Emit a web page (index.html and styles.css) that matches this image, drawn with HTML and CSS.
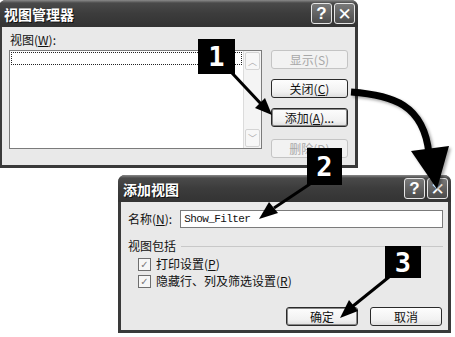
FILE: index.html
```html
<!DOCTYPE html>
<html lang="zh-CN">

<head>
  <meta charset="UTF-8">
  <title>视图管理器</title>
  <link rel="stylesheet" href="styles.css">
</head>

<body>
  <div class="stage">

    <!-- 视图管理器 -->
    <div class="window win-manager">
      <div class="titlebar">
        <span class="title">视图管理器</span>
        <span class="cap-btn">?</span>
        <span class="cap-btn close">✕</span>
      </div>
      <div class="body manager-body">
        <div class="list-col">
          <div class="label">视图(<u>W</u>):</div>
          <div class="listbox">
            <div class="list-rows">
              <div class="focus-row"></div>
            </div>
            <div class="scrollbar">
              <span class="sb-btn">︿</span>
              <span class="sb-btn">﹀</span>
            </div>
          </div>
        </div>
        <div class="btn-col">
          <span class="btn disabled">显示(S)</span>
          <span class="btn">关闭(<u>C</u>)</span>
          <span class="btn default">添加(<u>A</u>)...</span>
          <span class="btn disabled last">删除(D)</span>
        </div>
      </div>
    </div>

    <!-- 添加视图 -->
    <div class="window win-add">
      <div class="titlebar">
        <span class="title">添加视图</span>
        <span class="cap-btn">?</span>
        <span class="cap-btn close">✕</span>
      </div>
      <div class="body add-body">
        <div class="name-row">
          <span class="label">名称(<u>N</u>):</span>
          <span class="textbox">Show_Filter</span>
        </div>
        <div class="group-head">
          <span class="label">视图包括</span>
          <span class="rule"></span>
        </div>
        <div class="check-row">
          <span class="checkbox">✓</span>
          <span class="label">打印设置(<u>P</u>)</span>
        </div>
        <div class="check-row">
          <span class="checkbox">✓</span>
          <span class="label">隐藏行、列及筛选设置(<u>R</u>)</span>
        </div>
        <div class="ok-row">
          <span class="btn wide default">确定</span>
          <span class="btn wide">取消</span>
        </div>
      </div>
    </div>

    <!-- 箭头 -->
    <svg class="arrows" width="455" height="337" viewBox="0 0 455 337">
      <defs>
        <filter id="soft" x="-10%" y="-10%" width="130%" height="130%">
          <feDropShadow dx="2" dy="2" stdDeviation="1.5" flood-color="#000" flood-opacity="0.35" />
        </filter>
      </defs>
      <g fill="#000" stroke="#000">
        <line x1="232" y1="73" x2="262" y2="105" stroke-width="3" />
        <polygon points="272,115 255,108 265,98" stroke="none" />
        <line x1="310" y1="184" x2="274" y2="208" stroke-width="3" />
        <polygon points="259,219 269,202 278,213" stroke="none" />
        <line x1="389" y1="277" x2="353" y2="306" stroke-width="3" />
        <polygon points="340,318 349,300 358,311" stroke="none" />
      </g>
      <g filter="url(#soft)">
        <path d="M351,92 C392,95 424,104 429,154" fill="none" stroke="#000" stroke-width="7" />
        <polygon points="411,151 449,146 437,189" fill="#000" />
      </g>
    </svg>

    <span class="badge b1">1</span>
    <span class="badge b2">2</span>
    <span class="badge b3">3</span>
  </div>
</body>

</html>
```

FILE: styles.css
```css
html, body {
  margin: 0;
  background: #fff;
}

.stage {
  position: relative;
  width: 455px;
  height: 337px;
  overflow: hidden;
  font-family: "Noto Sans CJK SC", "Liberation Sans", sans-serif;
  font-size: 12px;
  color: #111;
}

u {
  text-decoration: underline;
  text-underline-offset: 1px;
}

/* windows */
.window {
  position: absolute;
  display: flex;
  flex-direction: column;
  background: #3a3a3a;
  border-radius: 7px 7px 0 0;
  padding: 0 3px 3px 3px;
  box-sizing: border-box;
}

.win-manager {
  left: -1px;
  top: 0;
  width: 359px;
  height: 168px;
}

.win-add {
  left: 118px;
  top: 175px;
  width: 333px;
  height: 158px;
}

.titlebar {
  display: flex;
  align-items: center;
  gap: 2px;
  height: 27px;
  padding: 0 3px 0 5px;
  margin: 0 -3px;
  border-radius: 7px 7px 0 0;
  background: linear-gradient(#8a8a8a 0, #4a4a4a 3px, #3c3c3c 50%, #333 100%);
}

.title {
  flex: 1;
  color: #fff;
  font-size: 14px;
  font-weight: bold;
  text-shadow: 1px 1px 0 #111;
}

.cap-btn {
  display: flex;
  align-items: center;
  justify-content: center;
  width: 19px;
  height: 19px;
  border: 1px solid #e6e6e6;
  border-radius: 3px;
  background: linear-gradient(#7a7a7a, #4b4b4b);
  color: #fff;
  font-family: "Liberation Sans", sans-serif;
  font-size: 17px;
  font-weight: bold;
}

.cap-btn.close {
  font-family: "DejaVu Sans", sans-serif;
  font-size: 17px;
  font-weight: bold;
}

.body {
  flex: 1;
  background: #e9e9e9;
}

/* 视图管理器 */
.manager-body {
  display: flex;
  padding: 5px 0 0 7px;
}

.list-col {
  display: flex;
  flex-direction: column;
}

.label {
  line-height: 14px;
  white-space: nowrap;
}

.list-col .label {
  margin-top: 1px;
  margin-bottom: 3px;
  padding-left: 1px;
}

.listbox {
  display: flex;
  width: 253px;
  height: 99px;
  box-sizing: border-box;
  border: 1px solid #7b7b7b;
  background: #fff;
}

.list-rows {
  flex: 1;
  padding: 1px 1px 0 1px;
}

.focus-row {
  height: 11px;
  border: 1px dotted #222;
}

.scrollbar {
  display: flex;
  flex-direction: column;
  justify-content: space-between;
  width: 17px;
  background: #f4f4f4;
  border-left: 1px solid #dcdcdc;
}

.sb-btn {
  display: flex;
  align-items: center;
  justify-content: center;
  height: 16px;
  margin: 1px;
  border: 1px solid #d4d4d4;
  border-radius: 2px;
  background: #f7f7f7;
  color: #aaa;
  font-size: 9px;
}

.btn-col {
  display: flex;
  flex-direction: column;
  gap: 10px;
  margin-left: 9px;
  padding-top: 18px;
}

.btn {
  display: flex;
  align-items: center;
  justify-content: center;
  width: 77px;
  height: 19px;
  box-sizing: border-box;
  border: 1px solid #2a2a2a;
  border-radius: 3px;
  background: linear-gradient(#fdfdfd, #f1f1f1 70%, #dedede);
  white-space: nowrap;
}

.btn.default {
  box-shadow: inset 0 0 0 1px #888;
}

.btn.disabled {
  border-color: #c4c4c4;
  color: #a8a8a8;
  background: #f2f2f2;
}

.btn.last {
  margin-top: 2px;
}

/* 添加视图 */
.add-body {
  display: flex;
  flex-direction: column;
  padding: 8px 5px 0 7px;
}

.name-row {
  display: flex;
  align-items: center;
  gap: 8px;
}

.textbox {
  flex: 1;
  height: 18px;
  box-sizing: border-box;
  border: 1px solid #7b7b7b;
  background: #fff;
  padding-left: 3px;
  font-family: "Liberation Mono", monospace;
  font-size: 11px;
  letter-spacing: -0.6px;
  line-height: 16px;
}

.group-head {
  display: flex;
  align-items: center;
  gap: 5px;
  margin-top: 11px;
}

.rule {
  flex: 1;
  border-top: 1px solid #c8c8c8;
}

.check-row {
  display: flex;
  align-items: center;
  gap: 5px;
  margin-top: 3px;
  padding-left: 10px;
}

.group-head + .check-row {
  margin-top: 4px;
}

.checkbox {
  display: flex;
  align-items: center;
  justify-content: center;
  width: 11px;
  height: 11px;
  border: 1px solid #6e6e6e;
  background: #f6f6f6;
  color: #7a7a7a;
  font-family: "DejaVu Sans", sans-serif;
  font-size: 10px;
  font-weight: bold;
}

.ok-row {
  display: flex;
  gap: 12px;
  margin-top: 19px;
  padding-left: 158px;
}

.btn.wide {
  width: 72px;
}

/* overlays */
.arrows {
  position: absolute;
  left: 0;
  top: 0;
}

.badge {
  position: absolute;
  display: flex;
  align-items: center;
  justify-content: center;
  background: #000;
  color: #fff;
  font-family: "DejaVu Sans Mono", monospace;
  font-weight: bold;
  font-size: 27px;
}

.b1 {
  left: 198px;
  top: 39px;
  width: 37px;
  height: 35px;
}

.b2 {
  left: 307px;
  top: 148px;
  width: 35px;
  height: 37px;
}

.b3 {
  left: 385px;
  top: 246px;
  width: 36px;
  height: 32px;
}
```
